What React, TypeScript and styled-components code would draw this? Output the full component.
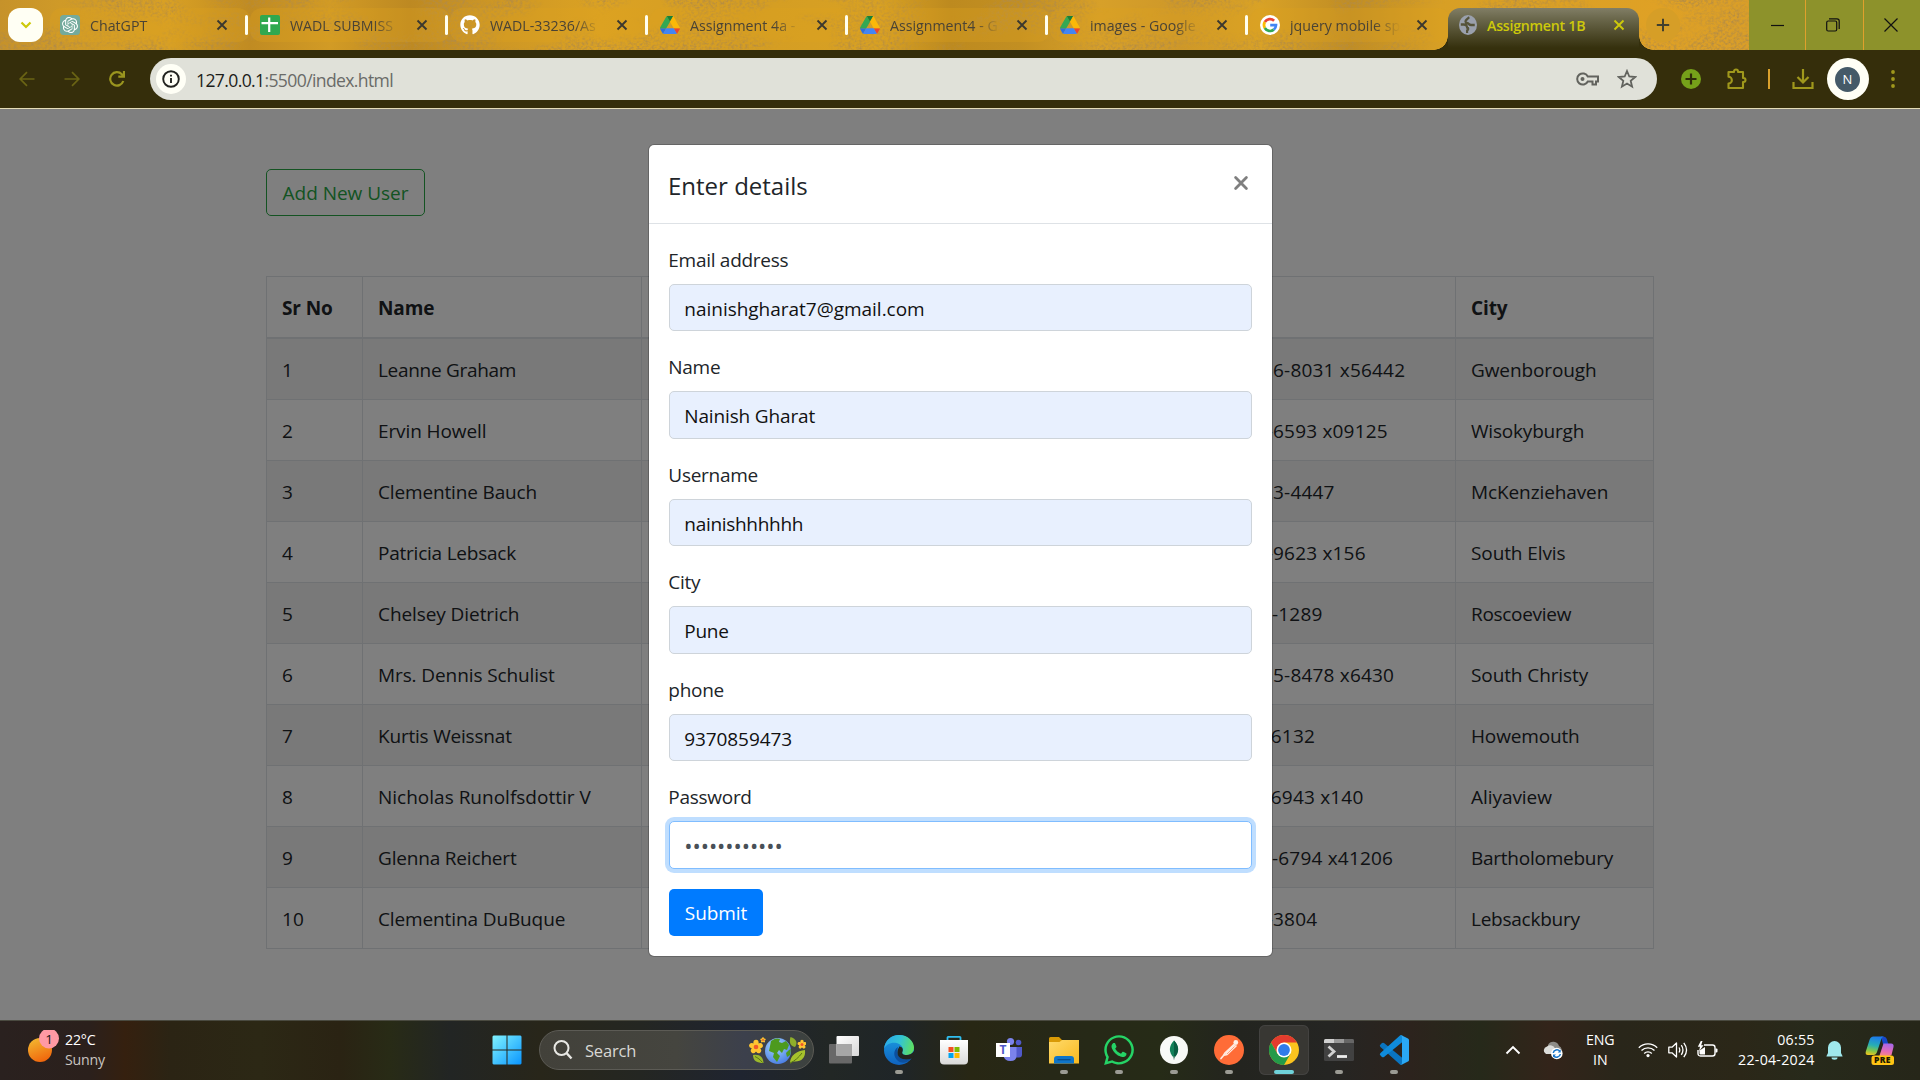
import React from 'react';
import styled, { createGlobalStyle, css } from 'styled-components';
import { FaGithub, FaWhatsapp } from 'react-icons/fa';
import { SiOpenai } from 'react-icons/si';

const Global = createGlobalStyle`
  *, *::before, *::after { box-sizing: border-box; }
  body { margin: 0; overflow: hidden; font-family: "Open Sans", "Noto Sans", sans-serif; }
  button { font-family: inherit; }
  svg { display: block; flex: none; }
`;

const Screen = styled.div`
  width: 1920px;
  height: 1080px;
  display: flex;
  flex-direction: column;
  overflow: hidden;
`;

/* ---------- Tab strip ---------- */

const TabStrip = styled.header`
  position: relative;
  isolation: isolate;
  height: 50px;
  display: flex;
  padding-left: 8px;
  background: linear-gradient(90deg, #c6922a 0, #cf9a28 60px, #d8a024 170px, #c08b22 250px, #d29b25 330px, #bd8922 410px,
    #cb9525 480px, #dba223 600px, #d49d23 740px, #d8a123 880px, #bd8a1f 950px, #c28f22 1020px, #d7a029 1100px,
    #ce9829 1180px, #d9a226 1260px, #c08d24 1350px, #d79f25 1440px, #dfa125 1660px, #d99e28 1749px);
`;

const Grain = styled.svg`
  position: absolute;
  inset: 0;
  z-index: -1;
`;

const SearchTabs = styled.button`
  width: 35px;
  height: 34px;
  margin: 8px 7px 0 0;
  padding: 0;
  border: 0;
  border-radius: 12px;
  background: #fffff4;
  display: grid;
  place-items: center;
`;

const Tab = styled.div`
  width: 200px;
  height: 34px;
  margin-top: 8px;
  padding-left: 10px;
  display: flex;
  align-items: center;
  color: #4a4335;
  border-radius: 12px;
  background: rgba(222, 163, 30, 0.3);
`;

const ActiveTab = styled(Tab)`
  position: relative;
  width: 191px;
  height: 42px;
  margin-left: -2px;
  padding: 0 0 8px 11px;
  border-radius: 12px 12px 0 0;
  color: #cdc90a;
  background: linear-gradient(#817e66, #6b684c 25%, #35300d 95%);
  &::before, &::after {
    content: '';
    position: absolute;
    bottom: 0;
    width: 14px;
    height: 14px;
  }
  &::before { left: -14px; background: radial-gradient(circle at 0 0, transparent 13.5px, #35300d 14px); }
  &::after { right: -14px; background: radial-gradient(circle at 100% 0, transparent 13.5px, #35300d 14px); }
`;

const TabTitle = styled.span<{ $bold?: boolean }>`
  width: 116px;
  margin-left: 10px;
  padding-top: 1px;
  white-space: nowrap;
  font-size: 14.2px;
  line-height: 20px;
  letter-spacing: 0;
  ${p => p.$bold ? css`font-weight: 600; letter-spacing: -0.25px;` : css`
    font-weight: 500;
    mask-image: linear-gradient(90deg, #000 84px, transparent 110px);
  `}
`;

const CloseSlot = styled.span<{ $left: number }>`
  margin-left: ${p => p.$left}px;
  width: 16px;
`;

const TabRule = styled.i`
  width: 3px;
  height: 20px;
  margin-left: 15px;
  border-radius: 2px;
  background: #fffff0;
`;

const NewTab = styled.div`
  width: 34px;
  height: 34px;
  margin: 8px 0 0 7px;
  border-radius: 50%;
  display: grid;
  place-items: center;
  background: #d69e27;
`;

const WindowControls = styled.div`
  margin-left: auto;
  width: 171px;
  display: grid;
  grid-template-columns: 56px 58px 57px;
  background: #8d922b;
`;

const Control = styled.div`
  display: grid;
  place-items: center;
  & + & {
    padding-right: 3px;
    border-left: 1px solid #e0a02c;
  }
`;

/* ---------- Toolbar ---------- */

const Toolbar = styled.nav`
  height: 59px;
  padding: 8px 0 0 16px;
  display: flex;
  background: #352e0b;
  border-bottom: 1px solid #e4dcb8;
`;

const NavSlot = styled.div`
  width: 22px;
  height: 42px;
  margin-right: 23px;
  display: grid;
  place-items: center;
`;

const Omnibox = styled.div`
  width: 1507px;
  height: 42px;
  margin-left: -1px;
  padding: 0 20px 0 6px;
  border-radius: 21px;
  background: #e0e1d9;
  display: flex;
  align-items: center;
`;

const InfoBadge = styled.span`
  width: 30px;
  height: 30px;
  border-radius: 50%;
  background: #fffff6;
  display: grid;
  place-items: center;
`;

const Url = styled.span`
  margin-left: 10px;
  padding-top: 2px;
  flex: 1;
  font-size: 17.6px;
  line-height: 24px;
  letter-spacing: -0.64px;
  color: #6a6b68;
  b { font-weight: 400; color: #1c1d1a; }
`;

const OmniIcons = styled.span`
  display: flex;
  align-items: center;
  gap: 18px;
`;

const ExtBar = styled.div`
  height: 42px;
  flex: 1;
  display: flex;
  align-items: center;
  padding-left: 23.5px;
`;

const ExtRule = styled.i`
  width: 2px;
  height: 20px;
  margin: 0 22px 0 21px;
  background: #d9a02c;
`;

const Profile = styled.div`
  width: 42px;
  height: 42px;
  margin: 0 21px 0 13px;
  border-radius: 50%;
  background: #fffff6;
  display: grid;
  place-items: center;
`;

const Initial = styled.span`
  width: 25px;
  height: 25px;
  border-radius: 50%;
  background: #455a68;
  color: #fff;
  font-size: 13px;
  line-height: 25px;
  text-align: center;
`;

/* ---------- Page ---------- */

const Page = styled.main`
  position: relative;
  height: 911px;
  padding: 60px 0 0 266px;
  background: #fff;
  color: #212529;
  font-size: 19px;
  letter-spacing: -0.28px;
`;

const AddButton = styled.button`
  display: block;
  width: 159px;
  height: 47px;
  padding: 2px 0 0;
  border: 1px solid #28a745;
  border-radius: 5px;
  background: transparent;
  color: #28a745;
  font-size: 19px;
  letter-spacing: -0.02px;
  line-height: 43px;
`;

const Table = styled.table`
  width: 1388px;
  margin-top: 60px;
  table-layout: fixed;
  border-collapse: separate;
  border-spacing: 0;
  border: solid #dee2e6;
  border-width: 1px 0 0 1px;
`;

const Col = styled.col<{ $w: number }>`
  width: ${p => p.$w}px;
`;

const Th = styled.th`
  height: 62px;
  padding: 2px 15px 0;
  border: solid #dee2e6;
  border-width: 0 1px 2px 0;
  text-align: left;
  font-weight: 700;
  letter-spacing: -0.1px;
`;

const Tr = styled.tr`
  &:nth-child(odd) { background: #f2f2f2; }
`;

const Td = styled.td<{ $track?: number }>`
  height: 61px;
  padding: 1px 15px 0;
  border: solid #dee2e6;
  border-width: 0 1px 1px 0;
  white-space: nowrap;
  letter-spacing: ${p => p.$track ?? 0.2}px;
`;

const Backdrop = styled.div`
  position: absolute;
  inset: 0;
  display: flex;
  justify-content: center;
  align-items: flex-start;
  padding: 35px 0 0 1px;
  background: rgba(0, 0, 0, 0.5);
`;

const Dialog = styled.section`
  width: 625px;
  height: 813px;
  border: 1px solid rgba(0, 0, 0, 0.2);
  border-radius: 6px;
  background: #fff;
  background-clip: padding-box;
`;

const DialogHeader = styled.div`
  height: 78.5px;
  padding: 20px 20px 20px 19px;
  display: flex;
  justify-content: space-between;
  border-bottom: 1px solid #dee2e6;
`;

const DialogTitle = styled.h5`
  margin: 0;
  padding-top: 1.5px;
  font-size: 24px;
  line-height: 37.5px;
  font-weight: 500;
  letter-spacing: 0;
`;

const DialogClose = styled.span`
  margin: 10px 3px 0 0;
`;

const Form = styled.form`
  padding: 20px;
`;

const Field = styled.label`
  display: block;
  height: 87.5px;
  margin-bottom: 20px;
`;

const FieldName = styled.span`
  display: block;
  height: 40px;
  margin-left: -0.7px;
  line-height: 33px;
`;

const Input = styled.span<{ $focus?: boolean; $track?: number }>`
  display: block;
  height: 47.5px;
  padding-left: 14.3px;
  border: 1px solid ${p => (p.$focus ? '#80bdff' : '#ced4da')};
  border-radius: 5px;
  background: ${p => (p.$focus ? '#fff' : '#e8f0fe')};
  color: ${p => (p.$focus ? '#495057' : '#111')};
  line-height: 49px;
  letter-spacing: ${p => p.$track ?? -0.28}px;
  ${p => p.$focus && css`
    box-shadow: 0 0 0 4px rgba(0, 123, 255, 0.25);
    font-size: 22px;
    letter-spacing: -0.07px;
    line-height: 46px;
  `}
`;

const Submit = styled.button`
  width: 94px;
  height: 47.5px;
  padding: 1.5px 0 0;
  border: 0;
  border-radius: 5px;
  background: #007bff;
  color: #fff;
  font-size: 19px;
  font-weight: 500;
  letter-spacing: -0.1px;
`;

/* ---------- Taskbar ---------- */

const Taskbar = styled.footer`
  height: 60px;
  padding-bottom: 1px;
  display: flex;
  align-items: center;
  border-top: 1px solid #4a4a40;
  color: #fff;
  background: linear-gradient(90deg, #2a211f 0, #2b201c 90px, #35200f 125px, #2b2414 170px, #2c2815 260px, #2a2313 340px,
    #282b16 390px, #222524 450px, #28261a 540px, #242622 640px, #1f2430 740px, #222725 830px, #1f2528 900px,
    #282714 970px, #262817 1050px, #262b17 1160px, #23241f 1240px, #252523 1330px, #2c231d 1410px, #26291a 1480px,
    #33241a 1550px, #29261a 1620px, #2b2718 1740px, #272a1b 1810px, #262619 1920px);
`;

const Weather = styled.div`
  width: 484px;
  padding-left: 26px;
  display: flex;
  gap: 5px;
`;

const SmallText = styled.div<{ $align?: string; $track?: number }>`
  font-size: 14.2px;
  line-height: 20px;
  letter-spacing: ${p => p.$track ?? -0.2}px;
  text-align: ${p => p.$align || 'left'};
  white-space: nowrap;
  span { display: block; }
  span + span { color: ${p => (p.$align ? '#fff' : '#c9c5c0')}; }
`;

const StartSlot = styled.div`
  width: 46px;
  padding-left: 8px;
`;

const SearchPill = styled.div`
  width: 275px;
  height: 40px;
  margin: 0 2.5px 0 9px;
  padding: 0 7px 0 13px;
  border: 1px solid #5c5b55;
  border-radius: 20px;
  background: linear-gradient(90deg, #42413a, #45453f 50%, #3c404c 75%, #3d423e);
  display: flex;
  align-items: center;
  color: #d8d8d4;
  font-size: 16.5px;
  letter-spacing: -0.2px;
`;

const SearchLabel = styled.span`
  margin-left: 12px;
  flex: 1;
`;

const AppButton = styled.div<{ $active?: boolean }>`
  position: relative;
  width: 50px;
  height: 50px;
  margin: 0 2.5px;
  border-radius: 6px;
  display: grid;
  place-items: center;
  ${p => p.$active && css`
    background: #383733;
    box-shadow: inset 0 0 0 1px #434240;
  `}
`;

const Indicator = styled.i<{ $active?: boolean }>`
  position: absolute;
  bottom: 1px;
  left: ${p => (p.$active ? 15 : 21)}px;
  width: ${p => (p.$active ? 20 : 8)}px;
  height: 4px;
  border-radius: 2px;
  background: ${p => (p.$active ? '#6fd2da' : '#9b9b94')};
`;

const Tray = styled.div`
  margin-left: auto;
  width: 415px;
  display: flex;
  align-items: center;
`;

const TrayItem = styled.div<{ $gap: number; $up?: number }>`
  margin-left: ${p => p.$gap}px;
  padding-bottom: ${p => p.$up ?? 0}px;
`;

/* ---------- Icons ---------- */

const Cross = ({ color = '#3c382e', size = 16, half = 4.5, w = 1.9 }) => (
  <svg width={size} height={size} viewBox={`${-size / 2} ${-size / 2} ${size} ${size}`}>
    <path d={`M${-half} ${-half}L${half} ${half}M${half} ${-half}L${-half} ${half}`} stroke={color} strokeWidth={w} />
  </svg>
);

const DialogCross = () => (
  <svg width="16" height="16" viewBox="-8 -8 16 16">
    <path d="M-5.4 -5.4L5.4 5.4M5.4 -5.4L-5.4 5.4" stroke="#7f7f7f" strokeWidth="2.8" strokeLinecap="round" />
  </svg>
);

const DriveIcon = () => (
  <svg width="20" height="20" viewBox="0 0 87.3 78">
    <path d="m6.6 66.85 3.85 6.65c.8 1.4 1.95 2.5 3.3 3.3l13.75-23.8h-27.5c0 1.55.4 3.1 1.2 4.5z" fill="#2b6fe0" />
    <path d="m43.65 25-13.75-23.8c-1.35.8-2.5 1.9-3.3 3.3l-25.4 44a9.06 9.06 0 0 0 -1.2 4.5h27.5z" fill="#34a853" />
    <path d="m73.55 76.8c1.35-.8 2.5-1.9 3.3-3.3l1.6-2.75 7.65-13.25c.8-1.4 1.2-2.95 1.2-4.5h-27.5l5.85 11.5z" fill="#ea4335" />
    <path d="m43.65 25 13.75-23.8c-1.35-.8-2.9-1.2-4.5-1.2h-18.5c-1.6 0-3.15.45-4.5 1.2z" fill="#188038" />
    <path d="m59.8 53h-32.3l-13.75 23.8c1.35.8 2.9 1.2 4.5 1.2h50.8c1.6 0 3.15-.45 4.5-1.2z" fill="#4285f4" />
    <path d="m73.4 26.5-12.7-22c-.8-1.4-1.95-2.5-3.3-3.3l-13.75 23.8 16.15 28h27.45c0-1.55-.4-3.1-1.2-4.5z" fill="#fbb808" />
  </svg>
);

const ChatIcon = () => (
  <svg width="20" height="20" viewBox="0 0 20 20">
    <rect width="20" height="20" rx="3.5" fill="#74aa9c" />
    <SiOpenai x="2" y="2" width="16" height="16" size={16} color="#fff" />
  </svg>
);

const SheetsIcon = () => (
  <svg width="20" height="20" viewBox="0 0 20 20">
    <rect width="20" height="20" rx="2" fill="#2fa84f" />
    <path d="M9.2 2.500V17M1.500 8.200H18" stroke="#fff" strokeWidth="2.2" />
  </svg>
);

const GoogleIcon = () => (
  <svg width="20" height="20" viewBox="0 0 20 20">
    <circle cx="10" cy="10" r="10" fill="#fff" />
    <g fill="none" strokeWidth="2.7">
      <path d="M14.1 5.7A6 6 0 0 0 4.8 7" stroke="#ea4335" />
      <path d="M4.8 7a6 6 0 0 0 0 6" stroke="#fbbc05" />
      <path d="M4.8 13a6 6 0 0 0 9 1.6" stroke="#34a853" />
      <path d="M13.8 14.6A6 6 0 0 0 16 10.2H10.2" stroke="#4285f4" />
    </g>
  </svg>
);

const GlobeIcon = () => (
  <svg width="18" height="20" viewBox="0 0 20 20" preserveAspectRatio="none">
    <circle cx="10" cy="10" r="10" fill="#9aa0ac" />
    <path d="M11.500 2.200C10 3 9 4.500 7.500 5.500 6.500 7 8 8 9.500 8.300 11 8.600 11 10 13.500 10H17.500M2 9.500H5.500C7.500 9.500 9 11 9 12.500 11 13 10.500 15 9 15.500V18" fill="none" stroke="#55533a" strokeWidth="2.400" />
  </svg>
);

const Svg30 = ({ children }: { children: React.ReactNode }) => (
  <svg width="30" height="30" viewBox="0 0 30 30">{children}</svg>
);

const StartIcon = () => (
  <Svg30>
    <defs>
      <linearGradient id="win" x1="0" y1="0" x2="1" y2="1">
        <stop offset="0" stopColor="#81f3ff" /><stop offset=".55" stopColor="#3fc0ff" /><stop offset="1" stopColor="#0a95ff" />
      </linearGradient>
    </defs>
    <path d="M1.500.5H14.500V14.500H.5V1.500ZM15.500.5H28.500L29.500 1.500V14.500H15.500ZM.5 15.500H14.500V29.500H1.500L.5 28.500ZM15.500 15.500H29.500V28.500L28.500 29.500H15.500Z" fill="url(#win)" />
  </Svg30>
);

const Flower = ({ x, y, s }: { x: number; y: number; s: number }) => (
  <g transform={`translate(${x} ${y}) scale(${s})`}>
    {[0, 72, 144, 216, 288].map(a => (
      <ellipse key={a} cx="0" cy="-3.400" rx="2.300" ry="2.800" fill="#ffc531" transform={`rotate(${a})`} />
    ))}
    <circle r="2" fill="#f0592a" />
  </g>
);

const EarthArt = () => (
  <svg width="57" height="30" viewBox="0 0 57 30">
    <defs>
      <radialGradient id="sea" cx=".4" cy=".3" r=".8"><stop offset="0" stopColor="#a4d6ff" /><stop offset="1" stopColor="#4275e0" /></radialGradient>
    </defs>
    <path d="M4 20c7-1 10 2 10.500 8C8 28 4 26 4 20Z" fill="#9cb92c" />
    <path d="M41.500 2c6 2 7.500 6 4.500 10-5-1-6-5-4.500-10Z" fill="#8fae2a" />
    <path d="M56 15c1 8-4 12-11 11.500-2 0-3 1.500-4 2C41 20 48 16 56 15Z" fill="#a6c32c" />
    <path d="M41 28c5-2 9-6 12-10M6 21.500c3 1.500 5 3 7.500 6" stroke="#587514" fill="none" />
    <circle cx="29" cy="16" r="13" fill="url(#sea)" />
    <path d="M22 6c4-3 7-3 9-2l-1 3 3 1 4-2 3 4-2 5-3-1-2 4-3-3-2 3 3 3-3 6-4-5 1-4-5-2 1-5Z" fill="#4d9a1e" />
    <path d="M40 15l2-1-1 6-3 2-1-4Z" fill="#4d9a1e" />
    <Flower x={7} y={12} s={1.150} />
    <Flower x={53} y={9.500} s={0.750} />
    <Flower x={14} y={5} s={0.450} />
  </svg>
);

const TaskViewIcon = () => (
  <Svg30>
    <defs><linearGradient id="tv" x1="0" y1="0" x2="1" y2="1"><stop offset="0" stopColor="#fff" /><stop offset="1" stopColor="#d8d8d8" /></linearGradient></defs>
    <rect x="0" y="9" width="23" height="19.500" rx="1" fill="#686868" />
    <rect x="7.500" y="1" width="22.500" height="20" rx="1" fill="url(#tv)" />
    <rect x="7.500" y="9" width="15.500" height="12" fill="#a6a6a6" />
  </Svg30>
);

const EdgeIcon = () => (
  <Svg30>
    <defs>
      <linearGradient id="ea" x1="0" y1=".4" x2="1" y2=".6"><stop offset="0" stopColor="#2aa9ea" /><stop offset=".5" stopColor="#33c4d4" /><stop offset="1" stopColor="#60e05c" /></linearGradient>
      <linearGradient id="eb" x1="0" y1="0" x2="0" y2="1"><stop offset="0" stopColor="#1b9de2" /><stop offset="1" stopColor="#0f62c0" /></linearGradient>
    </defs>
    <circle cx="15" cy="15" r="15" fill="url(#eb)" />
    <path d="M0 14C1 5 7.500 0 15 0c9 0 15 6.500 15 12.500 0 5-3.500 7.500-7.500 7.500-3.500 0-5-1.500-4-3.500C20 13 17 8.500 11.500 7.800 6 7.300 1.500 10 0 14Z" fill="url(#ea)" />
    <path d="M14 12c-5 3-5 10 0 14 4 3 9 2 13.500-2.500-7 2.500-13 0-14-5-.5-3 0-5 .5-6.500Z" fill="#0c4f9e" />
    <path d="M15 11.500c3.500 0 4.500 3 3.500 5-1 2 .5 3.500 4 3.500 3 0 6-1.500 7.500-4v5.500l-2 2c-7 2.400-14.500.5-14.500-5.700 0-2.500.5-4 1.500-5.300Z" fill="#23251f" />
  </Svg30>
);

const StoreIcon = () => (
  <Svg30>
    <defs><linearGradient id="st" x1="0" y1="0" x2="0" y2="1"><stop offset="0" stopColor="#fff" /><stop offset="1" stopColor="#d9d9d9" /></linearGradient></defs>
    <path d="M8.500 7V2.500q0-.7.700-.7H20.800q.7 0 .7.700V7" fill="none" stroke="#30bff0" strokeWidth="1.800" />
    <path d="M1 5H29V25.500Q29 29.500 25 29.500H5Q1 29.500 1 25.500Z" fill="url(#st)" />
    <path d="M9.500 12h5v5h-5Z" fill="#f25022" /><path d="M15.500 12h5v5h-5Z" fill="#7fba00" />
    <path d="M9.500 18h5v5h-5Z" fill="#00a4ef" /><path d="M15.500 18h5v5h-5Z" fill="#ffb900" />
  </Svg30>
);

const TeamsMark = styled.text`
  font: 700 12px "Open Sans", sans-serif;
  fill: #5059c9;
`;

const TeamsIcon = () => (
  <Svg30>
    <circle cx="24.500" cy="7.500" r="2.800" fill="#5059c9" />
    <path d="M20 12H28V19.500Q28 22.500 25 22.500H20Z" fill="#5059c9" />
    <circle cx="16.500" cy="6.500" r="3.600" fill="#7b83eb" />
    <path d="M9.500 12H22.500V21Q22.500 26 16.500 26T9.500 21Z" fill="#7b83eb" />
    <rect x="2" y="8" width="14" height="14" fill="#fff" />
    <TeamsMark x="5.500" y="19.400">T</TeamsMark>
  </Svg30>
);

const FolderIcon = () => (
  <Svg30>
    <defs><linearGradient id="fo" x1="0" y1="0" x2="1" y2="1"><stop offset="0" stopColor="#ffda6b" /><stop offset="1" stopColor="#f8b91f" /></linearGradient></defs>
    <path d="M0 3.500q0-1.500 1.500-1.500H10l3 3h15q2 0 2 2v3H0Z" fill="#d99a06" />
    <path d="M0 7H10.500L13 5H30V28.500H0Z" fill="url(#fo)" />
    <path d="M5 28.500V24q0-3 3-3H22q3 0 3 3v4.500Z" fill="#0f75c8" />
    <path d="M8.500 24.700H21.500" stroke="#0b4d8c" strokeWidth="1.300" />
  </Svg30>
);

const MongoIcon = () => (
  <Svg30>
    <circle cx="15" cy="15" r="14" fill="#f8f9f7" />
    <path d="M15 5.500c5 5 6 11.500 0 17.500-6-6-5-12.500 0-17.500Z" fill="#12805a" />
    <path d="M15 5.500c5 5 6 11.500 0 17.500Z" fill="#0a5c42" />
    <path d="M15 21v3.500" stroke="#6f9486" strokeWidth="1" />
  </Svg30>
);

const PostmanIcon = () => (
  <Svg30>
    <circle cx="15" cy="15" r="15" fill="#ff6c37" />
    <circle cx="21.800" cy="7.500" r="2.400" fill="#fff0e8" />
    <path d="M20 9.500 11 18l-1.500 2.500L7 23.500M22 11l-9 8.500-3 .8M20.500 10.500l-8 8" stroke="#ffe9df" strokeWidth="1.700" fill="none" strokeLinecap="round" />
    <path d="M20.500 11.500l-7.500 7.500" stroke="#ff6c37" strokeWidth=".6" />
  </Svg30>
);

const ChromeIcon = () => (
  <Svg30>
    <circle cx="15" cy="15" r="15" fill="#fcc31e" />
    <path d="M2 7.500A15 15 0 0 1 28 7.500H15L8.500 11.300V18.700Z" fill="#e33b2e" />
    <path d="M2 7.500 8.500 18.700 12 21 21.500 18.700 15 30A15 15 0 0 1 2 7.500Z" fill="#239a49" />
    <circle cx="15" cy="15" r="7.500" fill="#fff" />
    <circle cx="15" cy="15" r="5.900" fill="#2f7bea" />
  </Svg30>
);

const TerminalIcon = () => (
  <Svg30>
    <rect x="0" y="4" width="30" height="22" rx="1.500" fill="#414141" />
    <path d="M0 8V5.500Q0 4 1.500 4H10V8Z" fill="#d0d0d0" /><path d="M10 4H20V8H10Z" fill="#999" />
    <path d="M20 4H28.500Q30 4 30 5.500V8H20Z" fill="#666" />
    <path d="M4.500 11.500 10 16.500 4.500 21.500" stroke="#d0d0d0" strokeWidth="2.800" fill="none" />
    <path d="M13 21.500H23" stroke="#ededed" strokeWidth="2.800" />
  </Svg30>
);

const CodeIcon = () => (
  <Svg30>
    <path d="M1.500 9.500 3 8q1-.7 2 0L24 23.500V29L21.500 30 1.500 12Q0 10.800 1.500 9.500Z" fill="#0a74c0" />
    <path d="M1.500 20.500 3 22q1 .7 2 0L24 6.500V1L21.500 0 1.500 18Q0 19.200 1.500 20.500Z" fill="#0f8bdb" />
    <path d="M22 0 29 3.400Q30 4 30 5V25Q30 26 29 26.600L22 30Q23.200 28.500 23 27V3Q23.200 1.500 22 0Z" fill="#2aa8f5" />
  </Svg30>
);

const CloudSync = () => (
  <svg width="22" height="20" viewBox="0 0 22 20">
    <path d="M6 5a6 6 0 0 1 11 1 4 4 0 0 1 1 7H8Z" fill="#8e8c88" />
    <path d="M4 14a4 4 0 0 1 1-7.500 5 5 0 0 1 8 2L12 14Z" fill="#dcdcda" />
    <circle cx="14.800" cy="13.500" r="5.800" fill="#fff" />
    <path d="M11.300 13a3.600 3.600 0 0 1 6.500-1.700M18.300 14a3.600 3.600 0 0 1-6.500 1.700" stroke="#1674c9" strokeWidth="1.500" fill="none" />
    <path d="M18.700 9.500v3h-3ZM11 17.500v-3h3Z" fill="#1674c9" />
  </svg>
);

const WifiIcon = () => (
  <svg width="20" height="16" viewBox="0 0 20 16" fill="none" stroke="#fff" strokeWidth="1.400">
    <path d="M.8 5.700a13 13 0 0 1 18.400 0M3.500 8.600a9.200 9.200 0 0 1 13 0M6.200 11.400a5.400 5.400 0 0 1 7.600 0" />
    <circle cx="10" cy="13.600" r="1.600" fill="#fff" stroke="none" />
  </svg>
);

const SpeakerIcon = () => (
  <svg width="20" height="18" viewBox="0 0 20 18" fill="none" stroke="#fff" strokeWidth="1.300" strokeLinejoin="round">
    <path d="M.8 6.200H4L8.500 2V16L4 11.800H.8Z" />
    <path d="M11 6.500q1.600 2.500 0 5M13.300 4.200q3.300 4.800 0 9.600M15.800 1.800q5.500 7.200 0 14.400" />
  </svg>
);

const BatteryIcon = () => (
  <svg width="21" height="18" viewBox="0 0 21 18">
    <path d="M7 4H15.500Q18 4 18 6.500V12.500Q18 15 15.500 15H3.500Q1 15 1 12.500V9" fill="none" stroke="#fff" strokeWidth="1.400" />
    <path d="M18.500 7.500H19.500Q20.500 7.500 20.500 8.500V10.500Q20.500 11.500 19.500 11.500H18.500Z" fill="#fff" />
    <path d="M2.500 9.500 8 6V13.500H3.500Q2.500 13.500 2.500 12.500Z" fill="#fff" />
    <path d="M3.800 0 .8 5.800H3L2 10.500 6.500 4.300H4.200L5.500 0Z" fill="#fff" />
  </svg>
);

const BellIcon = () => (
  <svg width="17" height="20" viewBox="0 0 17 20">
    <path d="M2 13V7.500a6.500 6.500 0 0 1 13 0V13L16.500 16V16.500H.5V16Z" fill="#9fe8ec" />
    <path d="M5.500 17.500h6a3 2.200 0 0 1-6 0Z" fill="#9fe8ec" />
  </svg>
);

const PreLabel = styled.text`
  font: 800 8.5px "Open Sans", sans-serif;
  letter-spacing: 0.3px;
  fill: #201a00;
`;

const CopilotIcon = () => (
  <Svg30>
    <defs>
      <linearGradient id="ca" x1=".4" y1="0" x2=".2" y2="1"><stop offset="0" stopColor="#1c7ceb" /><stop offset=".45" stopColor="#27aeb4" /><stop offset=".75" stopColor="#7fc74a" /><stop offset="1" stopColor="#f2c51c" /></linearGradient>
      <linearGradient id="cb" x1=".6" y1="0" x2=".4" y2="1"><stop offset="0" stopColor="#a767e8" /><stop offset=".5" stopColor="#e66bb5" /><stop offset="1" stopColor="#ff9c62" /></linearGradient>
    </defs>
    <path d="M16 1.500h2.500q2.500 0 3.300 2.500l1.500 5H18Z" fill="#1747c9" />
    <path d="M8.500 1.500H19q-2 0-3 3.500L12 17q-1 3-3.500 3H3Q0 20 .8 16.500L4.500 5Q5.500 1.500 8.500 1.500Z" fill="url(#ca)" />
    <path d="M18.500 8.500H26q3.200 0 2.500 3.500L26.500 20 20 24H11q2.500 0 3.500-3.500Z" fill="url(#cb)" />
    <rect x="6.500" y="20.500" width="22.500" height="9.500" rx="2.500" fill="#ffc414" />
    <PreLabel x="9" y="28.400">PRE</PreLabel>
  </Svg30>
);

/* ---------- Data ---------- */

const tabs: [React.ReactNode, string][] = [
  [<ChatIcon />, 'ChatGPT'],
  [<SheetsIcon />, 'WADL SUBMISS'],
  [<FaGithub size={20} color="#fff" />, 'WADL-33236/As'],
  [<DriveIcon />, 'Assignment 4a -'],
  [<DriveIcon />, 'Assignment4 - G'],
  [<DriveIcon />, 'images - Google'],
  [<GoogleIcon />, 'jquery mobile sp'],
];

/* name, name tracking, phone, city, city tracking */
const users: [string, number, string, string, number][] = [
  ['Leanne Graham', -0.3, '1-770-736-8031 x56442', 'Gwenborough', -0.1],
  ['Ervin Howell', -0.1, '010-692-6593 x09125', 'Wisokyburgh', -0.2],
  ['Clementine Bauch', -0.15, '1-463-123-4447', 'McKenziehaven', -0.1],
  ['Patricia Lebsack', -0.23, '493-170-9623 x156', 'South Elvis', -0.1],
  ['Chelsey Dietrich', -0.08, '(254)954-1289', 'Roscoeview', -0.3],
  ['Mrs. Dennis Schulist', -0.1, '1-477-935-8478 x6430', 'South Christy', -0.1],
  ['Kurtis Weissnat', -0.2, '210.067.6132', 'Howemouth', -0.15],
  ['Nicholas Runolfsdottir V', 0, '586.493.6943 x140', 'Aliyaview', -0.05],
  ['Glenna Reichert', -0.18, '(775)976-6794 x41206', 'Bartholomebury', -0.25],
  ['Clementina DuBuque', -0.12, '024-648-3804', 'Lebsackbury', -0.25],
];

const fields: [string, string, number][] = [
  ['Email address', 'nainishgharat7@gmail.com', -0.02],
  ['Name', 'Nainish Gharat', -0.15],
  ['Username', 'nainishhhhhh', -0.3],
  ['City', 'Pune', -0.3],
  ['phone', '9370859473', -0.1],
];

const apps: { icon: React.ReactNode; state?: 'open' | 'active' }[] = [
  { icon: <TaskViewIcon /> },
  { icon: <EdgeIcon />, state: 'open' },
  { icon: <StoreIcon /> },
  { icon: <TeamsIcon /> },
  { icon: <FolderIcon />, state: 'open' },
  { icon: <FaWhatsapp size={34} color="#25d366" />, state: 'open' },
  { icon: <MongoIcon />, state: 'open' },
  { icon: <PostmanIcon />, state: 'open' },
  { icon: <ChromeIcon />, state: 'active' },
  { icon: <TerminalIcon />, state: 'open' },
  { icon: <CodeIcon />, state: 'open' },
];

export default function App() {
  return (
    <Screen>
      <Global />
      <TabStrip>
        <Grain width="1749" height="50">
          <filter id="grain" x="0" y="0" width="100%" height="100%">
            <feTurbulence type="fractalNoise" baseFrequency="0.35 0.4" numOctaves="2" seed="4" result="fine" />
            <feColorMatrix in="fine" values="0 0 0 0 0.45  0 0 0 0 0.26  0 0 0 0 0.06  2.2 0 0 0 -0.85" result="specks" />
            <feTurbulence type="fractalNoise" baseFrequency="0.012 0.03" numOctaves="3" seed="9" result="broad" />
            <feColorMatrix in="broad" values="0 0 0 0 0  0 0 0 0 0  0 0 0 0 0  5 0 0 0 -2.1" result="patches" />
            <feComposite in="specks" in2="patches" operator="in" />
          </filter>
          <rect width="1749" height="50" filter="url(#grain)" />
        </Grain>
        <SearchTabs>
          <svg width="14" height="14" viewBox="0 0 14 14"><path d="M2.500 4.500 7 9l4.500-4.500" fill="none" stroke="#cdc90a" strokeWidth="2.200" /></svg>
        </SearchTabs>
        {tabs.map(([icon, title], i) => (
          <Tab key={title}>
            {icon}
            <TabTitle>{title}</TabTitle>
            <CloseSlot $left={8}><Cross /></CloseSlot>
            {i < 6 && <TabRule />}
          </Tab>
        ))}
        <ActiveTab>
          <GlobeIcon />
          <TabTitle $bold>Assignment 1B</TabTitle>
          <CloseSlot $left={8}><Cross color="#cdc90a" /></CloseSlot>
        </ActiveTab>
        <NewTab>
          <svg width="14" height="14" viewBox="0 0 14 14"><path d="M7 .8V13.200M.8 7H13.200" stroke="#42402e" strokeWidth="2" /></svg>
        </NewTab>
        <WindowControls>
          <Control><svg width="14" height="14"><path d="M1 7.500H14" stroke="#111" strokeWidth="1.200" /></svg></Control>
          <Control>
            <svg width="14" height="14" fill="none" stroke="#111" strokeWidth="1.200">
              <rect x=".7" y="3" width="10" height="10" rx="1.500" /><path d="M3 .8H11Q13.200.8 13.200 3V11" />
            </svg>
          </Control>
          <Control><Cross color="#111" half={6.5} w={1.2} /></Control>
        </WindowControls>
      </TabStrip>

      <Toolbar>
        <NavSlot><svg width="16" height="16" viewBox="0 0 16 16" fill="none" stroke="#6a6414" strokeWidth="1.700"><path d="M15.500 8H1.500M8 1.200 1.200 8 8 14.800" /></svg></NavSlot>
        <NavSlot><svg width="16" height="16" viewBox="0 0 16 16" fill="none" stroke="#6a6414" strokeWidth="1.700"><path d="M.5 8H14.500M8 1.200 14.800 8 8 14.800" /></svg></NavSlot>
        <NavSlot>
          <svg width="16" height="16" viewBox="0 0 16 16" fill="none" stroke="#9a951f" strokeWidth="2.200"><path d="M14.300 10A6.700 6.700 0 1 1 12.800 3.300L14 4.600M15 0V5.700H9.300" /></svg>
        </NavSlot>
        <Omnibox>
          <InfoBadge>
            <svg width="18" height="18" viewBox="0 0 18 18"><circle cx="9" cy="9" r="7.800" fill="none" stroke="#22231f" strokeWidth="1.900" /><path d="M9 8V13M9 4.800V6.600" stroke="#22231f" strokeWidth="1.900" /></svg>
          </InfoBadge>
          <Url><b>127.0.0.1</b>:5500/index.html</Url>
          <OmniIcons>
            <svg width="23" height="14" viewBox="0 0 23 14" fill="none" stroke="#62635e" strokeWidth="2">
              <path d="M11.800 4.500A5.600 5.600 0 1 0 11.800 9.500H16.500V12.500H20V9.500H22V4.500Z" /><circle cx="6.500" cy="7" r="2" fill="#62635e" stroke="none" />
            </svg>
            <svg width="20" height="20" viewBox="0 0 20 20"><path d="M10 2 12.300 7.500 18.200 8 13.700 11.900 15.100 17.700 10 14.600 4.900 17.700 6.300 11.900 1.800 8 7.700 7.500Z" fill="none" stroke="#62635e" strokeWidth="1.800" /></svg>
          </OmniIcons>
        </Omnibox>
        <ExtBar>
          <svg width="20" height="20" viewBox="0 0 20 20"><circle cx="10" cy="10" r="10" fill="#76a11a" /><path d="M10 4.500V15.500M4.500 10H15.500" stroke="#2f2c0a" strokeWidth="2.200" /></svg>
          <svg width="46" height="22" viewBox="-24 0 46 22" fill="none" stroke="#a0981c" strokeWidth="2.100" strokeLinejoin="round">
            <path d="M3.500 4H9V3.500A2 2 0 0 1 13 3.500V4H18V10H18.500A2 2 0 0 1 18.500 14H18V20H3.500V15.500A3.200 3.200 0 0 0 3.500 8.800Z" />
          </svg>
          <ExtRule />
          <svg width="22" height="22" viewBox="0 0 22 22" fill="none" stroke="#a0981c" strokeWidth="2.200"><path d="M11 1V14M5.500 9 11 14.500 16.500 9M1.500 14V20H20.500V14" /></svg>
          <Profile><Initial>N</Initial></Profile>
          <svg width="6" height="20" viewBox="0 0 6 20" fill="#a0981c"><circle cx="3" cy="3" r="1.900" /><circle cx="3" cy="10" r="1.900" /><circle cx="3" cy="17" r="1.900" /></svg>
        </ExtBar>
      </Toolbar>

      <Page>
        <AddButton>Add New User</AddButton>
        <Table>
          <colgroup>
            {[96, 279, 180, 357, 277, 198].map((w, i) => <Col key={i} $w={w} />)}
          </colgroup>
          <thead>
            <tr><Th>Sr No</Th><Th>Name</Th><Th /><Th /><Th /><Th>City</Th></tr>
          </thead>
          <tbody>
            {users.map(([name, nameTrack, phone, city, cityTrack], i) => (
              <Tr key={name}>
                <Td>{i + 1}</Td>
                <Td $track={nameTrack}>{name}</Td>
                <Td />
                <Td />
                <Td>{phone}</Td>
                <Td $track={cityTrack}>{city}</Td>
              </Tr>
            ))}
          </tbody>
        </Table>
        <Backdrop>
          <Dialog>
            <DialogHeader>
              <DialogTitle>Enter details</DialogTitle>
              <DialogClose><DialogCross /></DialogClose>
            </DialogHeader>
            <Form>
              {fields.map(([name, value, track]) => (
                <Field key={name}><FieldName>{name}</FieldName><Input $track={track}>{value}</Input></Field>
              ))}
              <Field><FieldName>Password</FieldName><Input $focus>••••••••••••</Input></Field>
              <Submit type="button">Submit</Submit>
            </Form>
          </Dialog>
        </Backdrop>
      </Page>

      <Taskbar>
        <Weather>
          <svg width="34" height="40" viewBox="0 0 34 40">
            <defs><linearGradient id="sun" x1=".2" y1="0" x2=".6" y2="1"><stop offset="0" stopColor="#f3b830" /><stop offset="1" stopColor="#f0650c" /></linearGradient></defs>
            <circle cx="14" cy="20" r="12" fill="url(#sun)" />
            <circle cx="23" cy="8.500" r="10" fill="#ff99a4" />
            <text x="19.300" y="13.500" fontSize="13.500" fill="#1c1416">1</text>
          </svg>
          <SmallText><span>22°C</span><span>Sunny</span></SmallText>
        </Weather>
        <StartSlot><StartIcon /></StartSlot>
        <SearchPill>
          <svg width="20" height="20" viewBox="0 0 20 20" fill="none" stroke="#e8e8e4" strokeWidth="2"><circle cx="8.500" cy="8" r="7" /><path d="M13.500 13 18.500 18.500" strokeWidth="2.400" /></svg>
          <SearchLabel>Search</SearchLabel>
          <EarthArt />
        </SearchPill>
        {apps.map(({ icon, state }, i) => (
          <AppButton key={i} $active={state === 'active'}>
            {icon}
            {state && <Indicator $active={state === 'active'} />}
          </AppButton>
        ))}
        <Tray>
          <svg width="16" height="10" viewBox="0 0 16 10"><path d="M1.500 8.500 8 2l6.500 6.500" fill="none" stroke="#fff" strokeWidth="1.900" /></svg>
          <TrayItem $gap={21}><CloudSync /></TrayItem>
          <TrayItem $gap={22}><SmallText $align="center" $track={-0.1}><span>ENG</span><span>IN</span></SmallText></TrayItem>
          <TrayItem $gap={23.5}><WifiIcon /></TrayItem>
          <TrayItem $gap={10}><SpeakerIcon /></TrayItem>
          <TrayItem $gap={9}><BatteryIcon /></TrayItem>
          <TrayItem $gap={20} $up={1}><SmallText $align="right" $track={0.25}><span>06:55</span><span>22-04-2024</span></SmallText></TrayItem>
          <TrayItem $gap={11}><BellIcon /></TrayItem>
          <TrayItem $gap={22}><CopilotIcon /></TrayItem>
        </Tray>
      </Taskbar>
    </Screen>
  );
}
